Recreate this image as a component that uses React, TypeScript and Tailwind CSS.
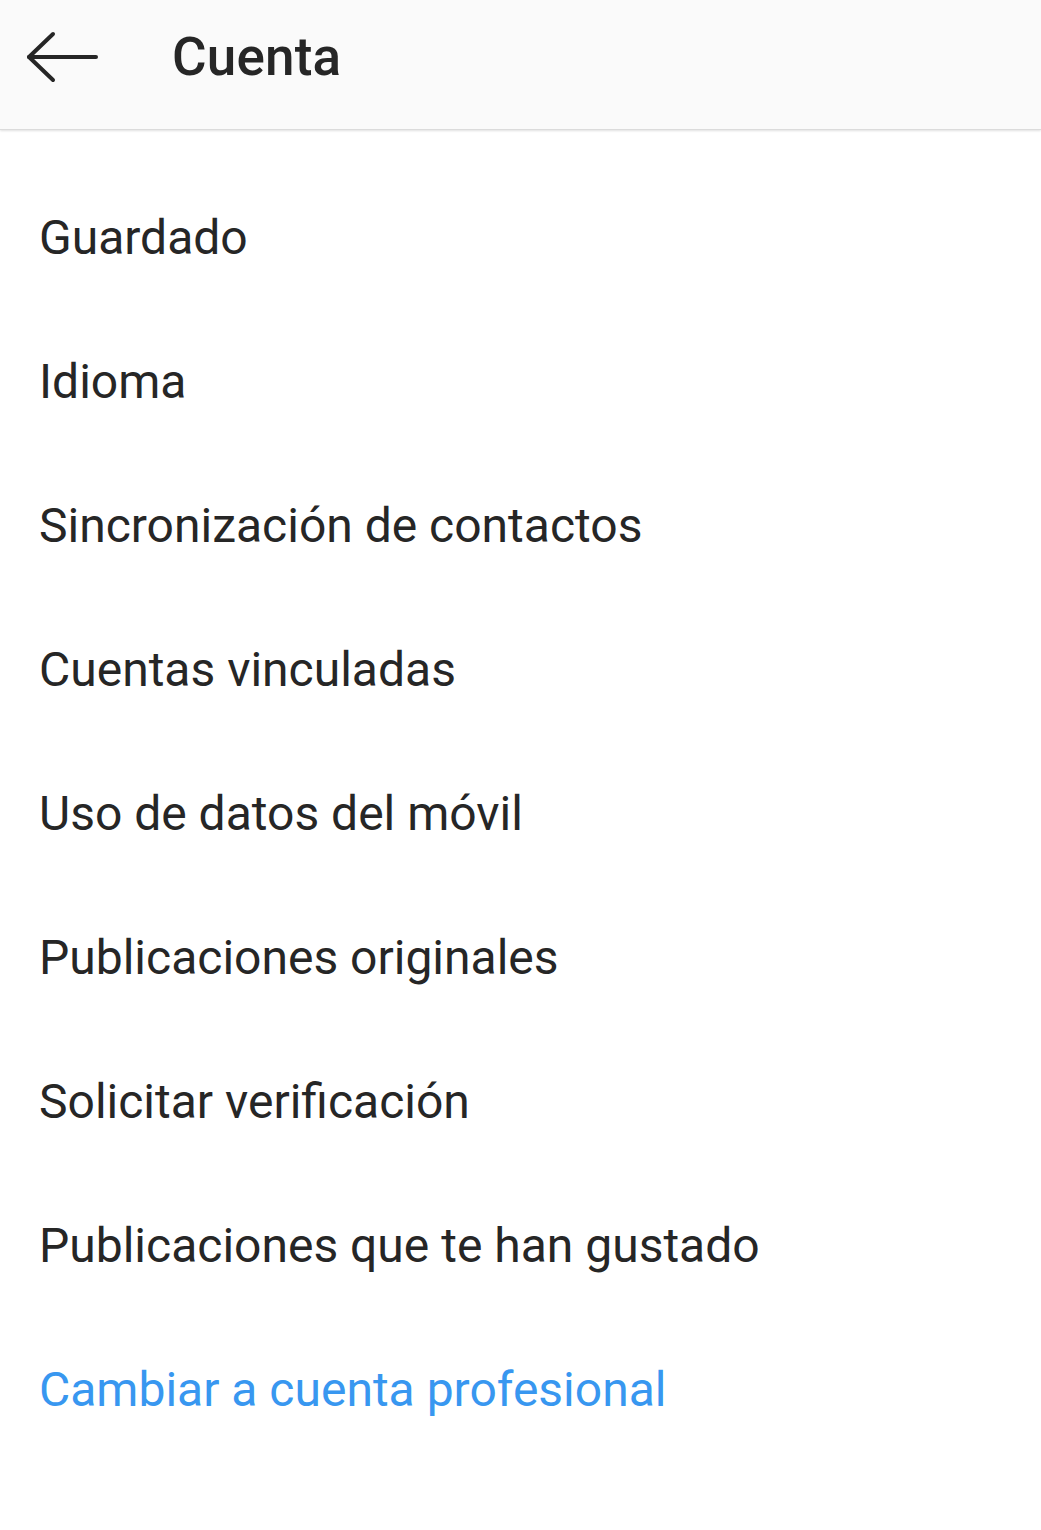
const items = [
  "Guardado",
  "Idioma",
  "Sincronización de contactos",
  "Cuentas vinculadas",
  "Uso de datos del móvil",
  "Publicaciones originales",
  "Solicitar verificación",
  "Publicaciones que te han gustado",
];

export default function App() {
  return (
    <div className="min-h-[1530px] w-full bg-white font-['Roboto',sans-serif] text-[#262626]">
      {/* Header */}
      <header className="flex h-[130px] items-center border-b border-[#dbdbdb] bg-[#fafafa] pb-[14px] shadow-[0_1px_2px_rgba(0,0,0,0.12)]">
        <button className="ml-[26px] flex h-[54px] w-[72px] items-center" aria-label="Atrás">
          <svg width="72" height="54" viewBox="0 0 72 54" fill="none" stroke="#262626" strokeWidth="4" strokeLinecap="round" strokeLinejoin="round">
            <path d="M70 26H3" />
            <path d="M27 3L3 26l24 23" />
          </svg>
        </button>
        <h1 className="ml-[74px] text-[53px] font-medium leading-none tracking-[0.2px]">Cuenta</h1>
      </header>

      {/* List */}
      <ul className="pt-[36px]">
        {items.map((label) => (
          <li key={label} className="flex h-[144px] items-center px-[39px] text-[48px] leading-none">
            {label}
          </li>
        ))}
        <li className="flex h-[144px] items-center px-[39px] text-[48px] leading-none text-[#3897f0]">
          Cambiar a cuenta profesional
        </li>
      </ul>
    </div>
  );
}
